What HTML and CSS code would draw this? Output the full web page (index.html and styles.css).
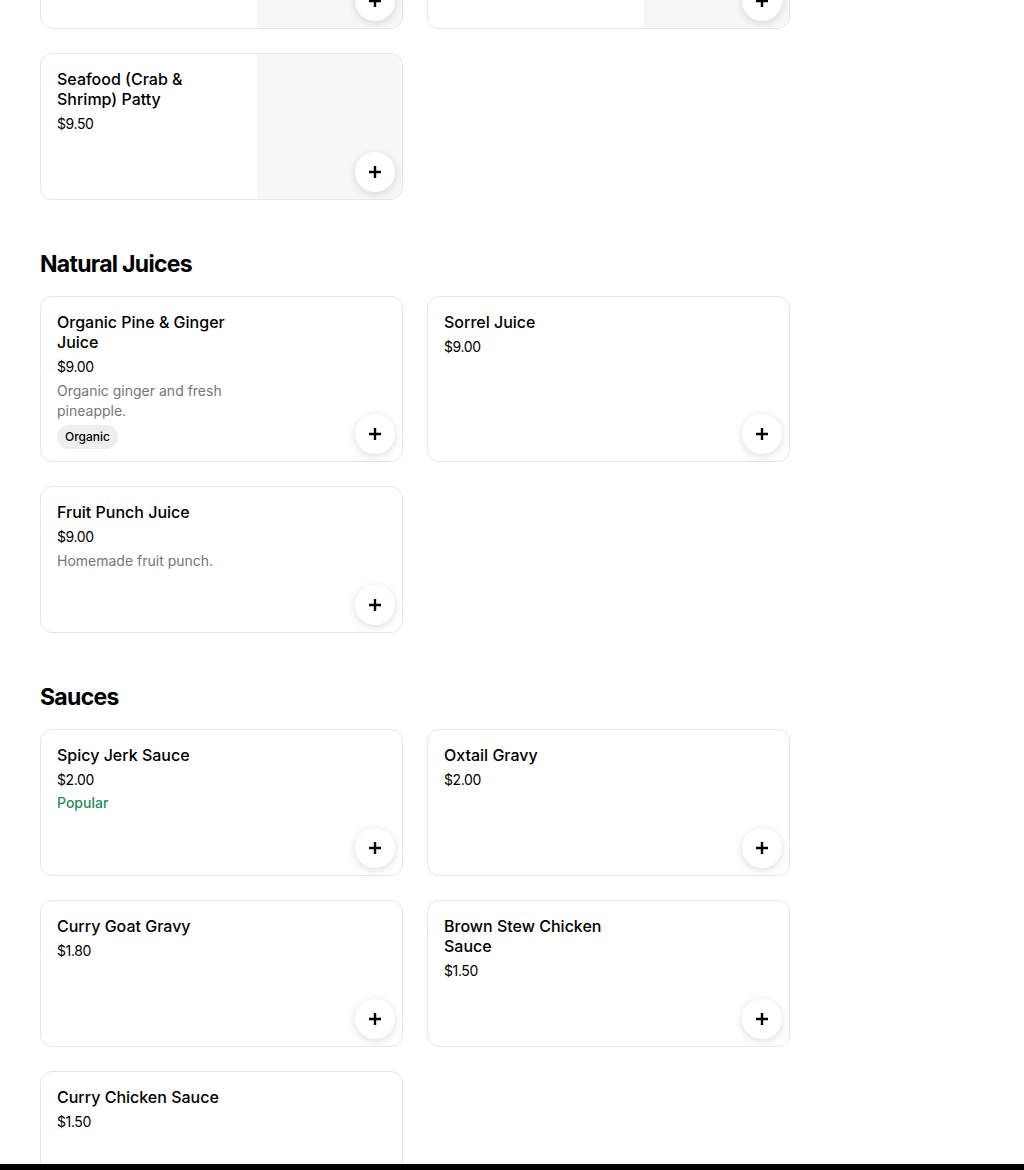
FILE: index.html
```html
<!DOCTYPE html>
<html lang="en">
<head>
  <meta charset="UTF-8">
  <title>Menu</title>
  <meta name="viewport" content="width=device-width, initial-scale=1.0" />
  <link rel="stylesheet" href="styles.css">
</head>
<body>

  <main class="menu">

    <!-- Patties (already scrolled past the top of the window) -->
    <section class="category category-scrolled">
      <div class="items">
        <div class="item">
          <div class="item-info">
            <div class="item-name">Beef Patty</div>
            <div class="item-price">$4.50</div>
          </div>
          <div class="item-photo"></div>
          <button class="add-btn" aria-label="Add">
            <svg width="12" height="12" viewBox="0 0 12 12"><path d="M6 0v12M0 6h12" stroke="#000" stroke-width="2.4"/></svg>
          </button>
        </div>
        <div class="item">
          <div class="item-info">
            <div class="item-name">Chicken Patty</div>
            <div class="item-price">$4.50</div>
          </div>
          <div class="item-photo"></div>
          <button class="add-btn" aria-label="Add">
            <svg width="12" height="12" viewBox="0 0 12 12"><path d="M6 0v12M0 6h12" stroke="#000" stroke-width="2.4"/></svg>
          </button>
        </div>
        <div class="item">
          <div class="item-info">
            <div class="item-name">Seafood (Crab &amp; Shrimp) Patty</div>
            <div class="item-price">$9.50</div>
          </div>
          <div class="item-photo"></div>
          <button class="add-btn" aria-label="Add">
            <svg width="12" height="12" viewBox="0 0 12 12"><path d="M6 0v12M0 6h12" stroke="#000" stroke-width="2.4"/></svg>
          </button>
        </div>
      </div>
    </section>

    <section class="category">
      <h2>Natural Juices</h2>
      <div class="items">
        <div class="item">
          <div class="item-info">
            <div class="item-name">Organic Pine &amp; Ginger Juice</div>
            <div class="item-price">$9.00</div>
            <div class="item-desc">Organic ginger and fresh pineapple.</div>
            <span class="item-tag">Organic</span>
          </div>
          <button class="add-btn" aria-label="Add">
            <svg width="12" height="12" viewBox="0 0 12 12"><path d="M6 0v12M0 6h12" stroke="#000" stroke-width="2.4"/></svg>
          </button>
        </div>
        <div class="item">
          <div class="item-info">
            <div class="item-name">Sorrel Juice</div>
            <div class="item-price">$9.00</div>
          </div>
          <button class="add-btn" aria-label="Add">
            <svg width="12" height="12" viewBox="0 0 12 12"><path d="M6 0v12M0 6h12" stroke="#000" stroke-width="2.4"/></svg>
          </button>
        </div>
        <div class="item">
          <div class="item-info">
            <div class="item-name">Fruit Punch Juice</div>
            <div class="item-price">$9.00</div>
            <div class="item-desc">Homemade fruit punch.</div>
          </div>
          <button class="add-btn" aria-label="Add">
            <svg width="12" height="12" viewBox="0 0 12 12"><path d="M6 0v12M0 6h12" stroke="#000" stroke-width="2.4"/></svg>
          </button>
        </div>
      </div>
    </section>

    <section class="category">
      <h2>Sauces</h2>
      <div class="items">
        <div class="item">
          <div class="item-info">
            <div class="item-name">Spicy Jerk Sauce</div>
            <div class="item-price">$2.00</div>
            <div class="item-popular">Popular</div>
          </div>
          <button class="add-btn" aria-label="Add">
            <svg width="12" height="12" viewBox="0 0 12 12"><path d="M6 0v12M0 6h12" stroke="#000" stroke-width="2.4"/></svg>
          </button>
        </div>
        <div class="item">
          <div class="item-info">
            <div class="item-name">Oxtail Gravy</div>
            <div class="item-price">$2.00</div>
          </div>
          <button class="add-btn" aria-label="Add">
            <svg width="12" height="12" viewBox="0 0 12 12"><path d="M6 0v12M0 6h12" stroke="#000" stroke-width="2.4"/></svg>
          </button>
        </div>
        <div class="item">
          <div class="item-info">
            <div class="item-name">Curry Goat Gravy</div>
            <div class="item-price">$1.80</div>
          </div>
          <button class="add-btn" aria-label="Add">
            <svg width="12" height="12" viewBox="0 0 12 12"><path d="M6 0v12M0 6h12" stroke="#000" stroke-width="2.4"/></svg>
          </button>
        </div>
        <div class="item">
          <div class="item-info">
            <div class="item-name">Brown Stew Chicken Sauce</div>
            <div class="item-price">$1.50</div>
          </div>
          <button class="add-btn" aria-label="Add">
            <svg width="12" height="12" viewBox="0 0 12 12"><path d="M6 0v12M0 6h12" stroke="#000" stroke-width="2.4"/></svg>
          </button>
        </div>
        <div class="item">
          <div class="item-info">
            <div class="item-name">Curry Chicken Sauce</div>
            <div class="item-price">$1.50</div>
          </div>
          <button class="add-btn" aria-label="Add">
            <svg width="12" height="12" viewBox="0 0 12 12"><path d="M6 0v12M0 6h12" stroke="#000" stroke-width="2.4"/></svg>
          </button>
        </div>
      </div>
    </section>

  </main>

  <div class="cart-bar"></div>

</body>
</html>
```

FILE: styles.css
```css
body {
  margin: 0;
  font-family: Inter, 'Noto Sans', sans-serif;
  background-color: #fff;
  color: #000;
}

.menu {
  width: 750px;
  padding: 0 40px;
}

/* the window is scrolled: only the bottom of the first row shows */
.category-scrolled {
  margin-top: -118px;
}

h2 {
  margin: 48px 0 16px;
  font-size: 23px;
  line-height: 32px;
  font-weight: 700;
  letter-spacing: -0.7px;
}

.items {
  display: grid;
  grid-template-columns: repeat(2, 363px);
  gap: 24px;
}

.item {
  position: relative;
  display: flex;
  min-height: 145px;
  border: 1px solid #e6e6e6;
  border-radius: 12px;
  overflow: hidden;
}

.item-info {
  width: 184px;
  padding: 15px 16px 12px;
}

.item-name {
  font-size: 16px;
  line-height: 20px;
  font-weight: 500;
}

.item-price {
  margin-top: 5px;
  font-size: 14px;
  line-height: 20px;
  letter-spacing: -0.4px;
}

.item-desc {
  margin-top: 4px;
  font-size: 14px;
  line-height: 20px;
  color: #767676;
}

.item-tag {
  display: inline-block;
  margin-top: 4px;
  padding: 0 8px;
  height: 24px;
  line-height: 24px;
  font-size: 12px;
  font-weight: 500;
  border-radius: 12px;
  background-color: #eeeeee;
}

.item-popular {
  margin-top: 5px;
  font-size: 14px;
  line-height: 16px;
  font-weight: 500;
  color: #278d59;
}

.item-photo {
  margin-left: auto;
  width: 145px;
  background-color: #f7f7f7;
}

.add-btn {
  position: absolute;
  right: 7px;
  bottom: 7px;
  width: 40px;
  height: 40px;
  padding: 0;
  border: none;
  border-radius: 50%;
  background-color: #fff;
  box-shadow: 0 2px 8px rgba(0, 0, 0, 0.14);
  display: flex;
  align-items: center;
  justify-content: center;
  cursor: pointer;
}

.cart-bar {
  position: fixed;
  left: 0;
  right: 0;
  bottom: 0;
  height: 6px;
  background-color: #000;
}
```
